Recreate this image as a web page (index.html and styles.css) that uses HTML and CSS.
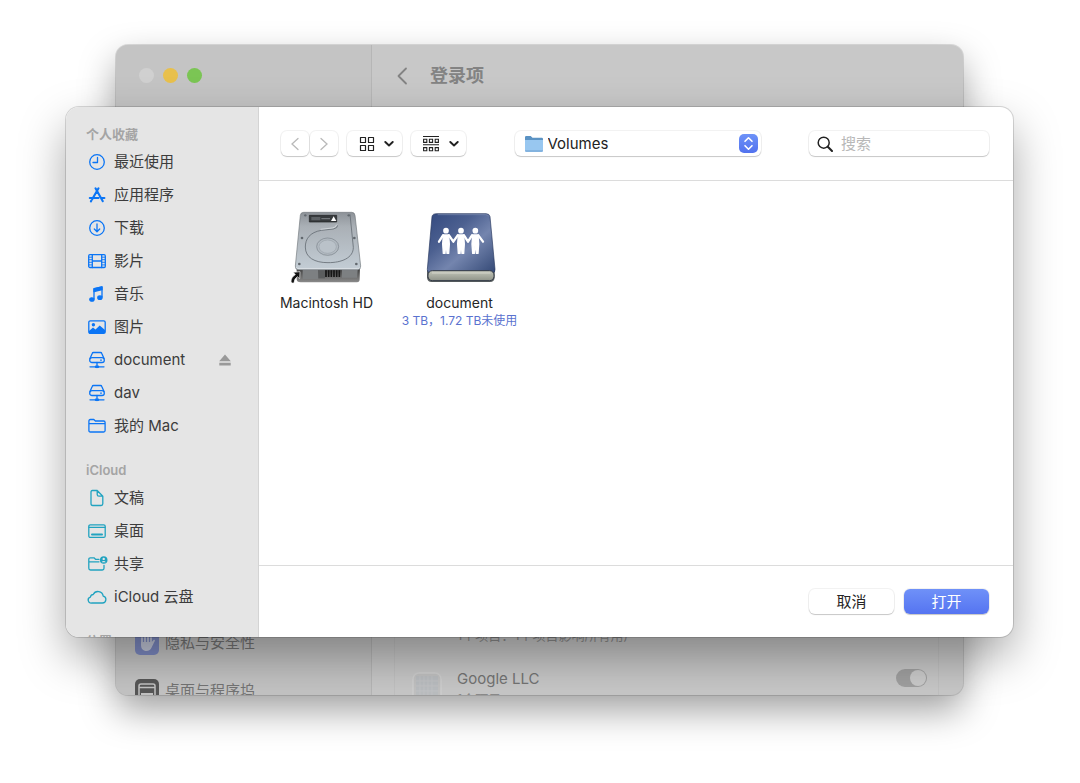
FILE: index.html
```html
<!DOCTYPE html>
<html lang="zh-CN">
<head>
<meta charset="utf-8">
<meta name="viewport" content="width=device-width, initial-scale=1">
<title>登录项</title>
<link rel="stylesheet" href="styles.css">
</head>
<body>
<div class="desktop">

  <section class="settings" aria-label="登录项">
    <aside class="settings-side">
      <div class="lights"><i class="light"></i><i class="light light-min"></i><i class="light light-max"></i></div>
      <nav class="settings-nav">
        <a class="settings-link" href="#">
          <svg class="settings-icon" viewBox="0 0 24 24"><rect width="24" height="24" rx="5" fill="#7d8ac2"/><path d="M7 12V7M10 11V4.500M13 11V4.500M16 13V7" stroke="#c3c8da" stroke-width="1.800" stroke-linecap="round"/><path d="M6 11h10.800l1.700-2c1-.8 1.800.2 1.300 1l-3.200 6.500C15.700 18.700 14 20 11.500 20 8 20 6 17.500 6 14z" fill="#c3c8da"/></svg>
          隐私与安全性</a>
        <a class="settings-link" href="#">
          <svg class="settings-icon" viewBox="0 0 24 24"><rect width="24" height="24" rx="5" fill="#575757"/><rect x="4" y="5" width="16" height="14" rx="2" fill="none" stroke="#c4c4c4" stroke-width="1.500"/><path d="M4 8.500h16" stroke="#c4c4c4" stroke-width="1.500"/><path d="M6 14h12v4H6z" fill="#c4c4c4"/></svg>
          桌面与程序坞</a>
      </nav>
    </aside>
    <div class="settings-main">
      <header class="settings-head">
        <button class="back" aria-label="返回"><svg width="12" height="18" viewBox="0 0 12 18"><path d="M10 1.500 2.500 9l7.500 7.500" fill="none" stroke="#838383" stroke-width="1.800" stroke-linecap="round" stroke-linejoin="round"/></svg></button>
        <h1 class="settings-title">登录项</h1>
      </header>
      <div class="login-list">
        <div class="login-row login-row-end">
          <span class="login-icon"></span>
          <p class="login-note">1个项目：1个项目影响所有用户</p>
        </div>
        <div class="login-row">
          <svg class="login-icon" viewBox="0 0 30 30"><rect x="1" y="1" width="28" height="28" rx="6" fill="#c2c2c2" stroke="#cfcfcf" stroke-width="1.500"/><path d="M4 4h22v22H4z" fill="#bbbec1"/><path d="M8 4v22M12 4v22M16 4v22M20 4v22M4 9h22M4 14h22M4 19h22M4 24h22" stroke="#c2c4c6" stroke-width="1"/></svg>
          <div class="login-text">
            <label class="login-name" for="google">Google LLC</label>
            <p class="login-note">1个项目</p>
          </div>
          <input class="switch" type="checkbox" id="google" checked>
        </div>
      </div>
    </div>
  </section>

  <section class="dialog" role="dialog" aria-label="打开">
    <nav class="sidebar">
      <h2 class="group">个人收藏</h2>
      <ul class="places">
        <li><a class="place" href="#"><svg class="icon" viewBox="0 0 20 20"><circle cx="10" cy="10" r="7.300"/><path d="M10.500 5.500v5H6"/></svg>最近使用</a></li>
        <li><a class="place" href="#"><svg class="icon icon-bold" viewBox="0 0 20 20"><path d="M11.500 3.300 5.200 14.300M8.500 3.300l7.300 12.900M2.800 13h8.700M14.500 13h2.900M3.900 16.300l.4-.6"/></svg>应用程序</a></li>
        <li><a class="place" href="#"><svg class="icon" viewBox="0 0 20 20"><circle cx="10" cy="10" r="7.300"/><path d="M10 6v7.500M7.300 11l2.700 2.700 2.700-2.700"/></svg>下载</a></li>
        <li><a class="place" href="#"><svg class="icon" viewBox="0 0 20 20"><rect x="1.700" y="3.700" width="16.600" height="12.800" rx="1.200"/><path d="M5.300 3.700v12.800M14.700 3.700v12.800M5.300 10h9.400"/><path d="M2 6.200h3M2 8.700h3M2 11.300h3M2 13.900h3M15 6.200h3M15 8.700h3M15 11.300h3M15 13.900h3" stroke-width=".9"/></svg>影片</a></li>
        <li><a class="place" href="#"><svg class="icon" viewBox="0 0 20 20"><path d="M7 15V4.800l8-1.800v10"/><path d="M7 4.700 15 3v2.700L7 7.500z" fill="currentColor"/><ellipse cx="4.900" cy="15.500" rx="2.100" ry="1.700" fill="currentColor"/><ellipse cx="12.900" cy="13.700" rx="2.100" ry="1.700" fill="currentColor"/></svg>音乐</a></li>
        <li><a class="place" href="#"><svg class="icon" viewBox="0 0 20 20"><rect x="1.800" y="3.800" width="16.400" height="12.600" rx="1.500"/><circle cx="6.400" cy="7.800" r="1.700" fill="currentColor" stroke="none"/><path d="m2 14 4-3.500 2.500 2L12.700 8.500 18 13v3H2z" fill="currentColor" stroke="none"/></svg>图片</a></li>
        <li><a class="place" href="#"><svg class="icon" viewBox="0 0 20 20"><path d="m3 8.500 2.200-5Q5.500 2.500 6.500 2.500h7q1 0 1.300 1l2.200 5"/><rect x="2.700" y="7.700" width="14.600" height="4.800" rx="2.300"/><path d="M10 12.500v5M3 16.800h14M13.600 10.100h.8"/><path d="M9 16.800h2" stroke-width="2.500"/></svg>document</a><button class="eject" aria-label="推出"><svg width="12" height="12" viewBox="0 0 12 12"><path d="M6 .5 11.800 7.200H.2zM.3 8.800h11.400v2.700H.3z" fill="#999"/></svg></button></li>
        <li><a class="place" href="#"><svg class="icon" viewBox="0 0 20 20"><path d="m3 8.500 2.200-5Q5.500 2.500 6.500 2.500h7q1 0 1.300 1l2.200 5"/><rect x="2.700" y="7.700" width="14.600" height="4.800" rx="2.300"/><path d="M10 12.500v5M3 16.800h14M13.600 10.100h.8"/><path d="M9 16.800h2" stroke-width="2.500"/></svg>dav</a></li>
        <li><a class="place" href="#"><svg class="icon" viewBox="0 0 20 20"><path d="M1.900 14.500V5q0-1.500 1.500-1.500h3.400L8.400 5h8.200q1.500 0 1.500 1.500v8q0 1.500-1.500 1.500H3.400q-1.500 0-1.500-1.500zM1.900 7.700h16.200"/></svg>我的 Mac</a></li>
      </ul>
      <h2 class="group">iCloud</h2>
      <ul class="places places-cloud">
        <li><a class="place" href="#"><svg class="icon" viewBox="0 0 20 20"><path d="M5.300 2.500h4.900l5.600 5.700v7.600q0 1.700-1.700 1.700H5.700Q4 17.500 4 15.800V4q0-1.500 1.300-1.500zM10.200 2.500v4q0 1.700 1.700 1.700h3.900"/></svg>文稿</a></li>
        <li><a class="place" href="#"><svg class="icon" viewBox="0 0 20 20"><rect x="1.800" y="3.800" width="16.400" height="12.600" rx="1.500"/><path d="M2 6.300h16"/><path d="M5 13.500h10" stroke-width="2"/></svg>桌面</a></li>
        <li><a class="place" href="#"><svg class="icon" viewBox="0 0 20 20"><path d="M12 5.300H8.500L7 3.800H3.300Q1.800 3.800 1.800 5.300v9q0 1.700 1.700 1.700h11.800q1.700 0 1.700-1.700v-3M1.800 7.800H12"/><circle cx="16.700" cy="6" r="3.800" fill="currentColor" stroke="none"/><circle cx="16.700" cy="4.900" r="1.200" fill="#e5e5e5" stroke="none"/><path d="M14.700 8.200a2.200 2.200 0 0 1 4 0z" fill="#e5e5e5" stroke="none"/></svg>共享</a></li>
        <li><a class="place" href="#"><svg class="icon" viewBox="0 0 20 20"><path d="M5 16h10.400a3.500 3.500 0 0 0 .8-6.900 5.300 5.300 0 0 0-10-1.600 3.100 3.100 0 0 0-2.800 2.700A3 3 0 0 0 5 16z"/></svg>iCloud 云盘</a></li>
      </ul>
      <h2 class="group">位置</h2>
    </nav>

    <div class="browser">
      <header class="toolbar">
        <div class="tools">
          <div class="history">
            <button class="tool tool-nav" aria-label="后退"><svg width="10" height="14" viewBox="0 0 10 14"><path d="M8 1.500 2 7l6 5.500" fill="none" stroke="currentColor" stroke-width="1.300" stroke-linecap="round"/></svg></button>
            <button class="tool tool-nav" aria-label="前进"><svg width="10" height="14" viewBox="0 0 10 14"><path d="m2 1.500 6 5.500-6 5.500" fill="none" stroke="currentColor" stroke-width="1.300" stroke-linecap="round"/></svg></button>
          </div>
          <button class="tool tool-menu" aria-label="显示方式"><svg width="16" height="16" viewBox="0 0 16 16"><path d="M1.500 1.500h5v5h-5zM9.500 1.500h5v5h-5zM1.500 9.500h5v5h-5zM9.500 9.500h5v5h-5z" fill="none" stroke="currentColor" stroke-width="1.200" stroke-linejoin="round"/></svg><svg width="10" height="6" viewBox="0 0 10 6"><path d="m1.300 1 3.700 3.500L8.700 1" fill="none" stroke="currentColor" stroke-width="1.900" stroke-linecap="round" stroke-linejoin="round"/></svg></button>
          <button class="tool tool-menu" aria-label="分组方式"><svg width="18" height="18" viewBox="0 0 18 18"><path d="M1 1.500h16M1 9.800h16" stroke="currentColor" stroke-width="1.100"/><path d="M1.600 4.200h3.200v3.200H1.600zM7.400 4.200h3.200v3.200H7.400zM13.200 4.200h3.200v3.200h-3.200zM1.600 12.600h3.200v3.200H1.600zM7.400 12.600h3.200v3.200H7.400zM13.200 12.600h3.200v3.200h-3.200z" fill="none" stroke="currentColor" stroke-width="1.100"/></svg><svg width="10" height="6" viewBox="0 0 10 6"><path d="m1.300 1 3.700 3.500L8.700 1" fill="none" stroke="currentColor" stroke-width="1.900" stroke-linecap="round" stroke-linejoin="round"/></svg></button>
        </div>
        <div class="location">
          <svg width="18" height="16" viewBox="0 0 18 16"><path d="M0 1.200Q0 0 1.200 0h4.500l1.800 1.700h9.300q1.200 0 1.200 1.200V6H0z" fill="#5b93c4"/><path d="M0 4h18v10.500q0 1.500-1.500 1.500h-15Q0 16 0 14.500z" fill="#98c7f0"/><path d="M0 14h18q0 2-1.500 2h-15Q0 16 0 14z" fill="#83b3df"/></svg>
          <select class="location-select" aria-label="位置"><option>Volumes</option></select>
          <svg class="stepper" viewBox="0 0 19 19"><defs><linearGradient id="st" x2="0" y2="1"><stop stop-color="#6d92f8"/><stop offset="1" stop-color="#5272ee"/></linearGradient></defs><rect width="19" height="19" rx="5" fill="url(#st)"/><path d="m6 7.300 3.500-3.500L13 7.300M6 11.700l3.500 3.500 3.500-3.500" fill="none" stroke="#fff" stroke-width="1.600" stroke-linecap="round" stroke-linejoin="round"/></svg>
        </div>
        <label class="search">
          <svg width="16" height="16" viewBox="0 0 16 16"><circle cx="6.700" cy="6.700" r="5.500" fill="none" stroke="#222" stroke-width="1.500"/><path d="m10.800 10.800 4.200 4.200" stroke="#222" stroke-width="2" stroke-linecap="round"/></svg>
          <input class="search-input" type="search" placeholder="搜索" aria-label="搜索">
        </label>
      </header>

      <div class="files">
        <figure class="file">
          <svg class="file-art" viewBox="57 24 228 240">
            <defs>
              <linearGradient id="lid" x2="0" y2="1"><stop stop-color="#8d9298"/><stop offset=".25" stop-color="#aab0b6"/><stop offset="1" stop-color="#c3cdd5"/></linearGradient>
              <linearGradient id="base" x2="0" y2="1"><stop stop-color="#333"/><stop offset="1" stop-color="#8b8b8b"/></linearGradient>
            </defs>
            <path d="M80 200h190l-1 38q0 9-8 9H92q-12 0-12-9z" fill="url(#base)"/>
            <path d="M98 209h47v28H98zM216 209h47l-2 24h-45z" fill="#7d8082"/>
            <path d="M145 210h20v25h-20z" fill="#5b5d5e"/>
            <path d="M168 209v22M176 209v22M184 209v22M192 209v22M200 209v22M208 209v22" stroke="#151515" stroke-width="5"/>
            <path d="M101 37h144q9 0 10 9l17 152q1 11-9 11H85q-10 0-9-11L91 46q1-9 10-9z" fill="url(#lid)" stroke="#73787d" stroke-width="2"/>
            <path d="M79 202q3 4 8 4h175q6 0 8-4" fill="none" stroke="#dce2e6" stroke-width="3"/>
            <path d="M203 75Q204 84 190 87L154 91C119 97 106 117 106 141C106 173 134 188 174 188C215 188 250 174 250 142L240 43" fill="none" stroke="#666e75" stroke-width="2.500"/>
            <path d="M203 75h-4q0 7-12 9l-35 4" fill="none" stroke="#e2e7ea" stroke-width="2"/>
            <ellipse cx="173" cy="140" rx="33" ry="26" fill="#b2bac1" stroke="#7a8289" stroke-width="2"/><ellipse cx="173" cy="140" rx="26" ry="20" fill="#bac2c9" stroke="#939ba2" stroke-width="1.500"/>
            <path d="M118 46h82v20h-82z" fill="#373a3d" stroke="#1f2123" stroke-width="2"/><path d="M124 51h27v10h-27z" fill="#5c6064"/><path d="M154 56h26" stroke="#73777b" stroke-width="4"/><path d="m191 49 8 14h-16z" fill="#fff"/>
            <g fill="#62686e"><circle cx="106" cy="46" r="3.500"/><circle cx="236" cy="46" r="3.500"/><circle cx="96" cy="114" r="4"/><circle cx="253" cy="114" r="4"/><circle cx="88" cy="192" r="4"/><circle cx="259" cy="192" r="4"/></g>
            <path d="m67 249-4-3q0-15 13-22l-6-7 20-2-1 21-7-6q-10 7-10 19z" fill="#111" stroke="#f5f5f5" stroke-width="2"/>
          </svg>
          <figcaption class="file-name">Macintosh HD</figcaption>
        </figure>
        <figure class="file">
          <svg class="file-art" viewBox="81 24 228 240">
            <defs>
              <linearGradient id="cover" x2="1" y2="1"><stop stop-color="#33497f"/><stop offset=".35" stop-color="#4c6090"/><stop offset=".6" stop-color="#7485ae"/><stop offset="1" stop-color="#334875"/></linearGradient>
              <linearGradient id="pages" x2="0" y2="1"><stop stop-color="#c4c7ba"/><stop offset="1" stop-color="#8f9389"/></linearGradient>
            </defs>
            <path d="M96 210h203v22q0 14-14 14H110q-14 0-14-14z" fill="#5a5f60"/>
            <path d="M126 41h147q10 0 12 9l15 158q1 11-9 11H107q-10 0-10-11l14-158q1-9 15-9z" fill="url(#cover)" stroke="#26375e" stroke-width="2"/>
            <path d="M128 44h144q7 0 9 5" fill="none" stroke="#8090b4" stroke-width="2"/>
            <rect x="99" y="212" width="198" height="30" rx="13" fill="url(#pages)" stroke="#343b48" stroke-width="3"/>
            <path d="M111 219h175" stroke="#e5e6dd" stroke-width="2"/>
            <g fill="#fff" stroke="#fff" stroke-linejoin="round" stroke-linecap="round">
              <g id="man"><circle cx="153" cy="92" r="8.500" stroke="none"/><path d="M145 105h16l2 27-2 28h-5l-2-24h-2l-2 24h-5l-2-28z" stroke-width="4"/></g>
              <use href="#man" x="45"/><use href="#man" x="88"/>
              <path d="m144 106-12 19M162 106l13 19 13-19M207 106l12 19 12-19M250 106l14 19" fill="none" stroke-width="7"/>
            </g>
          </svg>
          <figcaption class="file-name">document<small class="file-note">3 TB，1.72 TB未使用</small></figcaption>
        </figure>
      </div>

      <footer class="actions">
        <button class="action">取消</button>
        <button class="action action-main">打开</button>
      </footer>
    </div>
  </section>
</div>
</body>
</html>
```
FILE: styles.css
```css
* { box-sizing: border-box; }

body, h1, h2, p, ul, figure { margin: 0; }

body {
  font: 15px/20px Inter, "Noto Sans CJK SC", sans-serif;
  color: #262626;
  background: #fff;
}

button, input, select { font: inherit; color: inherit; margin: 0; }
button { border: 0; padding: 0; background: none; }
a { color: inherit; text-decoration: none; }
ul { list-style: none; padding: 0; }
svg { flex: none; display: block; }

.desktop { position: relative; height: 100vh; overflow: hidden; }

/* Window behind the dialog */
.settings {
  position: absolute;
  inset: 45px 117px 88px 116px;
  display: flex;
  overflow: hidden;
  border-radius: 12px;
  color: #747474;
  background: #c8c8c8;
  box-shadow: 0 0 0 1px rgba(0, 0, 0, .12), 0 16px 36px rgba(0, 0, 0, .36);
}

.settings-side {
  display: flex;
  flex-direction: column;
  width: 256px;
  border-right: 1px solid #b6b6b6;
  background: #c4c4c4;
}

.lights { display: flex; gap: 9px; padding: 23px; }
.light { width: 15px; height: 15px; border-radius: 50%; background: #d0d0d0; }
.light-min { background: #e8c04c; }
.light-max { background: #7bc554; }

.settings-nav { margin: auto 0 -20px; padding-left: 19px; }
.settings-link { display: flex; align-items: center; gap: 6px; height: 48px; }
.settings-icon { width: 24px; height: 24px; }

.settings-main { flex: 1; display: flex; flex-direction: column; }
.settings-head { display: flex; align-items: center; gap: 22px; height: 62px; padding-left: 24px; }
.settings-title { font-size: 18px; font-weight: 600; color: #838383; }

.login-list {
  margin: auto 24px -25px 22px;
  padding: 0 11px 0 17px;
  border: solid rgba(0, 0, 0, .03);
  border-width: 0 1px;
}
.login-row { display: flex; align-items: flex-start; gap: 15px; height: 63px; padding: 12px 0; }
.login-row-end { align-items: flex-end; }
.login-icon { width: 30px; height: 30px; margin-top: 3px; }
.login-text { flex: 1; }
.login-note { font-size: 13px; color: #8c8c8c; }

.switch {
  appearance: none;
  display: flex;
  justify-content: flex-end;
  width: 31px;
  height: 18px;
  padding: 1px;
  border-radius: 9px;
  background: #a0a0a0;
}
.switch::before { content: ""; width: 16px; height: 16px; border-radius: 50%; background: #cbcbcb; }

/* Open dialog */
.dialog {
  position: absolute;
  inset: 107px 67px 146px 66px;
  display: flex;
  overflow: hidden;
  border-radius: 13px;
  background: #fff;
  box-shadow: 0 0 0 1px rgba(0, 0, 0, .14), 0 20px 46px rgba(0, 0, 0, .34);
}

.sidebar {
  width: 193px;
  padding: 16px 0 0 20px;
  overflow: hidden;
  border-right: 1px solid #d4d4d4;
  color: #3c3c3c;
  background: #e5e5e5;
}

.group { font-size: 13px; line-height: 22px; font-weight: 600; color: #a4a4a4; }
.places { margin-bottom: 17px; color: #0b75f5; }
.places-cloud { color: #21a3c0; }
.places li { display: flex; align-items: center; padding: 0 27px 0 1px; }
.place { flex: 1; display: flex; align-items: center; gap: 7px; height: 33px; color: #3c3c3c; }
.icon {
  width: 20px;
  height: 20px;
  color: #0b75f5;
  overflow: visible;
  fill: none;
  stroke: currentColor;
  stroke-width: 1.3;
  stroke-linecap: round;
  stroke-linejoin: round;
}
.icon-bold { stroke-width: 2.1; }
.places-cloud .icon { color: #21a3c0; }

.browser { flex: 1; min-width: 0; display: flex; flex-direction: column; }

.toolbar {
  display: flex;
  align-items: center;
  justify-content: space-between;
  height: 74px;
  padding: 0 24px 0 22px;
  border-bottom: 1px solid #dcdcdc;
}
.tools { display: flex; gap: 9px; }
.history { display: flex; gap: 1px; }

.tool, .location, .search, .action {
  height: 25px;
  border-radius: 6px;
  background: #fff;
  box-shadow: 0 0 0 1px rgba(0, 0, 0, .05), 0 1px 1px rgba(0, 0, 0, .18);
}
.tool { display: flex; align-items: center; justify-content: center; }
.tool-nav { width: 28px; color: #b9b9b9; }
.tool-menu { gap: 9px; width: 55px; padding-left: 4px; color: #222; }

.location { display: flex; align-items: center; width: 246px; padding: 0 3px 0 10px; }
.location-select { flex: 1; appearance: none; border: 0; padding: 0 5px; background: none; color: #222; }
.stepper { width: 19px; height: 19px; pointer-events: none; }

.search { display: flex; align-items: center; gap: 8px; width: 180px; padding: 0 8px; }
.search-input { flex: 1; min-width: 0; border: 0; padding: 0; background: none; outline: 0; }
.search-input::placeholder { color: #b8b8b8; }

.files { flex: 1; display: flex; align-items: flex-start; padding: 27px 0 0 1px; }
.file { display: flex; flex-direction: column; align-items: center; gap: 5px; width: 133px; text-align: center; }
.file-art { width: 76px; height: 80px; }
.file-name { font-size: 14px; }
.file-note { display: block; font-size: 12px; line-height: 16px; color: #5a72cf; }

.actions {
  display: flex;
  align-items: center;
  justify-content: flex-end;
  gap: 10px;
  height: 72px;
  padding-right: 24px;
  border-top: 1px solid #dcdcdc;
}
.action { width: 85px; }
.action-main { color: #fff; background: linear-gradient(#6f91f8, #5574f1); }
```
